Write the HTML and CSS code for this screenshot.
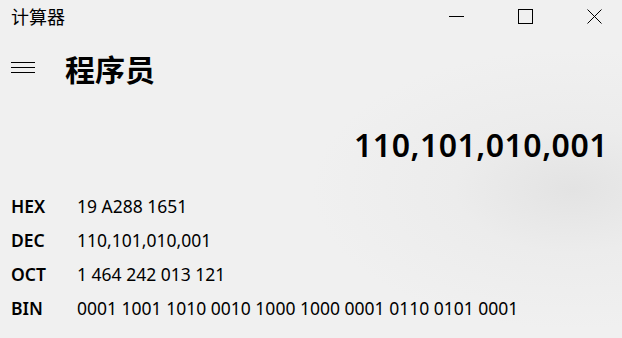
FILE: index.html
```html
<!DOCTYPE html>
<html lang="zh-CN">

<head>
  <meta charset="UTF-8" />
  <meta name="viewport" content="width=device-width, initial-scale=1.0" />
  <title>计算器</title>
  <link rel="stylesheet" href="styles.css">
</head>

<body>
  <div class="window">
    <div class="titlebar">
      <span class="app-title">计算器</span>
      <div class="window-controls">
        <button class="ctrl" aria-label="最小化">
          <svg width="15" height="15" viewBox="0 0 15 15"><path d="M0 7.5h15" stroke="#000" stroke-width="1" /></svg>
        </button>
        <button class="ctrl" aria-label="最大化">
          <svg width="15" height="15" viewBox="0 0 15 15"><rect x="0.5" y="0.5" width="14" height="14" fill="none" stroke="#000" stroke-width="1" /></svg>
        </button>
        <button class="ctrl" aria-label="关闭">
          <svg width="15" height="15" viewBox="0 0 15 15"><path d="M0.5 0.5l14 14M14.5 0.5l-14 14" stroke="#000" stroke-width="1" /></svg>
        </button>
      </div>
    </div>

    <div class="header">
      <button class="menu" aria-label="打开导航">
        <svg width="24" height="12" viewBox="0 0 24 12"><path d="M0 0.5h24M0 5.5h24M0 10.5h24" stroke="#000" stroke-width="1" /></svg>
      </button>
      <h1>程序员</h1>
    </div>

    <div class="result">110,101,010,001</div>

    <div class="radix">
      <div class="radix-row">
        <span class="radix-name">HEX</span>
        <span class="radix-value">19 A288 1651</span>
      </div>
      <div class="radix-row">
        <span class="radix-name">DEC</span>
        <span class="radix-value">110,101,010,001</span>
      </div>
      <div class="radix-row">
        <span class="radix-name">OCT</span>
        <span class="radix-value">1 464 242 013 121</span>
      </div>
      <div class="radix-row">
        <span class="radix-name">BIN</span>
        <span class="radix-value">0001 1001 1010 0010 1000 1000 0001 0110 0101 0001</span>
      </div>
    </div>
  </div>
</body>

</html>
```

FILE: styles.css
```css
html, body {
  margin: 0;
  height: 100%;
}
body {
  font-family: "Noto Sans", "Noto Sans CJK SC", sans-serif;
  color: #000;
  background: radial-gradient(ellipse 260px 140px at 92% 56%, #e3e3e3 0%, #ececec 45%, #f0f0f0 100%), #f0f0f0;
  overflow: hidden;
}
.window {
  display: flex;
  flex-direction: column;
}
.titlebar {
  display: flex;
  align-items: center;
  justify-content: space-between;
  height: 32px;
  padding-left: 11px;
}
.app-title {
  font-family: "Noto Sans CJK SC", sans-serif;
  font-size: 18px;
  line-height: 32px;
}
.window-controls {
  display: flex;
  gap: 23px;
  padding-right: 5px;
}
.ctrl {
  width: 46px;
  height: 32px;
  border: none;
  background: none;
  padding: 0;
  display: flex;
  align-items: center;
  justify-content: center;
}
.ctrl svg {
  display: block;
}
.header {
  display: flex;
  align-items: center;
  height: 72px;
  padding-left: 11px;
  gap: 30px;
}
.menu {
  border: none;
  background: none;
  padding: 0;
  width: 24px;
  height: 12px;
}
.menu svg {
  display: block;
}
h1 {
  margin: 0;
  font-family: "Noto Sans CJK SC", sans-serif;
  font-size: 30px;
  font-weight: 700;
  line-height: 40px;
}
.result {
  margin-top: 21px;
  padding-right: 14px;
  text-align: right;
  font-size: 32px;
  font-weight: 600;
  letter-spacing: 0.5px;
  line-height: 40px;
}
.radix {
  margin-top: 24px;
}
.radix-row {
  display: flex;
  height: 34px;
  line-height: 34px;
  padding-left: 11px;
  font-size: 17.5px;
}
.radix-name {
  width: 66px;
  font-weight: 600;
}
```
